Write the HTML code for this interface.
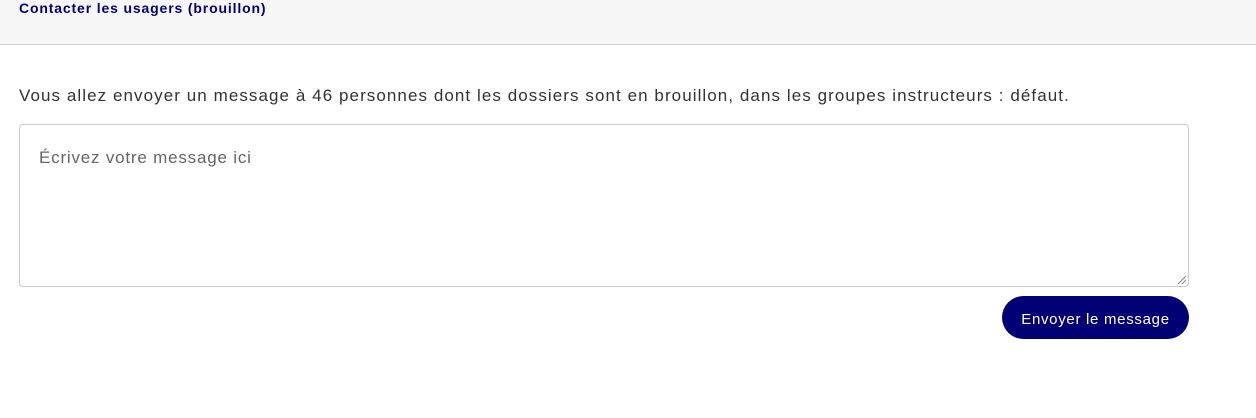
<!DOCTYPE html>
<html><head><meta charset="utf-8"><style>
body{margin:0;width:1256px;height:418px;background:#fff;font-family:"Liberation Sans",sans-serif;position:relative;overflow:hidden}
.hdr{position:absolute;left:0;top:0;width:1256px;height:44px;background:#f7f7f7;border-bottom:1px solid #cfcfcf}
.hdr span{position:absolute;left:19px;top:0px;font-size:14px;font-weight:bold;color:#000074;letter-spacing:0.85px}
.p{position:absolute;left:19px;top:86px;font-size:17px;color:#333;white-space:nowrap;letter-spacing:1.07px}
.ta{position:absolute;left:19px;top:124px;width:1168px;height:161px;border:1px solid #ccc;border-radius:4px}
.ta span{position:absolute;left:19px;top:23px;font-size:17px;color:#666;letter-spacing:0.8px}
.ta i{position:absolute;right:2px;bottom:2px;width:8px;height:8px;background:linear-gradient(135deg,transparent 45%,#888 45%,#888 55%,transparent 55%,transparent 70%,#888 70%,#888 80%,transparent 80%)}
.btn{position:absolute;left:1002px;top:296px;width:187px;height:43px;border-radius:22px;background:#000074;color:#fff;font-size:15px;line-height:47px;text-align:center;letter-spacing:0.7px}
</style></head><body>
<div class="hdr"><span>Contacter les usagers (brouillon)</span></div>
<div class="p">Vous allez envoyer un message à 46 personnes dont les dossiers sont en brouillon, dans les groupes instructeurs : défaut.</div>
<div class="ta"><span>Écrivez votre message ici</span><i></i></div>
<div class="btn">Envoyer le message</div>
</body></html>
